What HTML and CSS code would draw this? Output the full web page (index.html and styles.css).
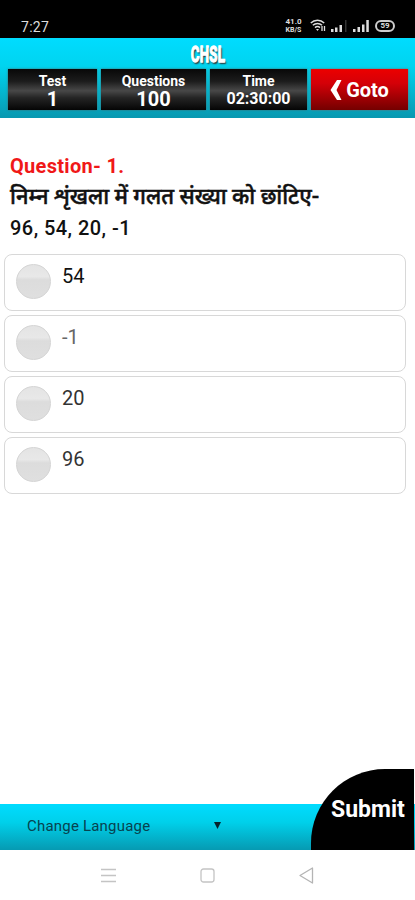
FILE: index.html
```html
<!DOCTYPE html>
<html lang="hi">
<head>
  <meta charset="UTF-8">
  <meta name="viewport" content="width=device-width, initial-scale=1.0">
  <title>CHSL Test</title>
  <link rel="stylesheet" href="styles.css">
</head>
<body>
  <div class="status-bar">
    <span class="clock">7:27</span>
    <div class="status-icons">
      <div class="net-speed"><span>41.0</span><span>KB/S</span></div>
      <svg class="wifi" width="16" height="13" viewBox="0 0 16 13" fill="none" stroke="#ddd" stroke-width="1.5">
        <path d="M0.8 4C4.5 0.3 10.5 0.3 14.2 4"/>
        <path d="M2.8 6.3C5.5 3.8 9.5 3.8 12 6.3"/>
        <path d="M5 8.6C6.5 7.2 8.5 7.2 10 8.6"/>
        <path d="M6 10h3l-1.5 2z" fill="#ddd" stroke="none"/>
        <path d="M12 7v5M14.5 7v5" stroke-width="1.3"/>
      </svg>
      <svg class="signal-one" width="17" height="12" viewBox="0 0 17 12" fill="#ddd">
        <path d="M0 9h2.5v3H0zM4 7.5h2.5v4.5H4zM8.5 5h2.5v7H8.5z"/>
        <path d="M14 0h1.5v12H14z" fill="#333"/>
      </svg>
      <svg class="signal-two" width="17" height="12" viewBox="0 0 17 12" fill="#ddd">
        <path d="M0 9h2.5v3H0zM4.5 7h2.5v5H4.5zM9 4.5h2.5v7.5H9zM13.3 0h2.5v12h-2.5z"/>
      </svg>
      <span class="battery">59</span>
    </div>
  </div>

  <div class="header">
    <h1>CHSL</h1>
    <div class="info-row">
      <div class="info-box"><span class="label">Test</span><span class="value">1</span></div>
      <div class="info-box"><span class="label">Questions</span><span class="value">100</span></div>
      <div class="info-box"><span class="label">Time</span><span class="value timer">02:30:00</span></div>
      <button class="goto-button">
        <svg width="12" height="20" viewBox="0 0 12 20" fill="#fff"><path d="M7 0h4.5L6.5 10l5 10H7L0.5 10z"/></svg>
        Goto
      </button>
    </div>
  </div>

  <div class="content">
    <h2>Question- 1.</h2>
    <p class="question">निम्न शृंखला में गलत संख्या को छांटिए-</p>
    <p class="series">96, 54, 20, -1</p>
    <div class="options">
      <div class="option"><span class="radio"></span><span class="option-text dark">54</span></div>
      <div class="option"><span class="radio"></span><span class="option-text light">-1</span></div>
      <div class="option"><span class="radio"></span><span class="option-text">20</span></div>
      <div class="option"><span class="radio"></span><span class="option-text">96</span></div>
    </div>
  </div>

  <div class="footer">
    <div class="language">
      <span>Change Language</span>
      <svg width="7" height="7" viewBox="0 0 7 7"><path d="M0 0h7L3.5 7z" fill="#06222a"/></svg>
    </div>
    <button class="submit-button">Submit</button>
  </div>

  <div class="nav-bar">
    <svg width="15" height="15" viewBox="0 0 15 15" stroke="#c4c4c4" stroke-width="1.3"><path d="M0 1.5h15M0 7.5h15M0 13.5h15"/></svg>
    <svg width="15" height="15" viewBox="0 0 15 15" fill="none" stroke="#c4c4c4" stroke-width="1.3"><rect x="1" y="1" width="13" height="13" rx="2.5"/></svg>
    <svg width="15" height="17" viewBox="0 0 15 17" fill="none" stroke="#b4b4b4" stroke-width="1.3" stroke-linejoin="round"><path d="M13.5 1v15L1 8.5z"/></svg>
  </div>
</body>
</html>
```
FILE: styles.css
```css
* {
  box-sizing: border-box;
}

body {
  display: flex;
  flex-direction: column;
  height: 900px;
  margin: 0;
  background-color: #fff;
  font-family: Roboto, "Noto Sans", sans-serif;
  overflow: hidden;
}

h1, h2, p {
  margin: 0;
}

button {
  border: none;
  padding: 0;
  color: #fff;
  font-family: inherit;
  font-weight: bold;
}

/* Phone status bar */
.status-bar {
  display: flex;
  justify-content: space-between;
  height: 38px;
  padding: 19px 20px 0 21px;
  background-color: #000;
  color: #ddd;
}

.clock {
  font-size: 14px;
  line-height: 16px;
  letter-spacing: 0.3px;
}

.status-icons {
  display: flex;
  align-items: flex-start;
}

.net-speed {
  display: flex;
  flex-direction: column;
  width: 19px;
  margin: -1px 7px 0 0;
  font-size: 8px;
  font-weight: bold;
  line-height: 8px;
  text-align: center;
}

.net-speed span:last-child {
  font-size: 7px;
}

.wifi {
  margin-right: 5px;
}

.signal-one {
  margin: 1px 5px 0 0;
}

.signal-two {
  margin: 1px 5px 0 0;
}

.battery {
  width: 20px;
  height: 12px;
  margin-top: 1px;
  border: 2px solid #ccc;
  border-radius: 6px;
  font-size: 8px;
  font-weight: bold;
  line-height: 8px;
  text-align: center;
}

/* Header */
.header {
  height: 80px;
  padding: 5px 7px 0 8px;
  background-image: linear-gradient(#00dcff, #00d4ef 35%, #0898b0);
}

.header h1 {
  height: 26px;
  color: #fff;
  font-size: 22px;
  line-height: 23px;
  letter-spacing: 0.5px;
  text-align: center;
  text-shadow: 2px 2px 2px #333;
  transform: scaleX(0.6);
  -webkit-text-stroke: 1.3px #fff;
}

.info-row {
  display: grid;
  grid-template-columns: 89px 105px 97px 97px;
  gap: 4px;
  height: 41px;
}

.info-box {
  display: flex;
  flex-direction: column;
  align-items: center;
  padding-top: 4px;
  background-image: linear-gradient(#080808, #1c1c1c 30%, #484848 53%, #252525 70%, #050505);
  box-shadow: 0 0 2px #466;
  color: #fff;
  font-weight: bold;
}

.label {
  font-size: 14px;
  line-height: 16px;
}

.value {
  font-size: 20px;
  line-height: 20px;
}

.timer {
  font-size: 16px;
}

.goto-button {
  display: flex;
  align-items: center;
  justify-content: center;
  gap: 4px;
  background-image: linear-gradient(#ec0000, #d40008 35%, #740000);
  box-shadow: 0 0 2px #766;
  font-size: 20px;
}

/* Question */
.content {
  flex: 1;
  padding: 33px 9px 0 4px;
}

.content h2 {
  padding-left: 6px;
  color: #f01818;
  font-size: 20px;
  line-height: 30px;
  letter-spacing: 0.3px;
}

.question,
.series {
  padding-left: 6px;
  color: #111;
  font-size: 20px;
  font-weight: 500;
  line-height: 31px;
}

.question {
  height: 32px;
  font-size: 21.9px;
  -webkit-text-stroke: 0.5px #111;
}

.series {
  letter-spacing: 0.45px;
}

.options {
  display: flex;
  flex-direction: column;
  gap: 4px;
  margin-top: 10px;
}

.option {
  display: flex;
  gap: 11px;
  height: 57px;
  padding: 9px 11px;
  border: 1.5px solid #d8d8d8;
  border-radius: 8px;
}

.radio {
  width: 35px;
  height: 35px;
  border: 1px solid #d4d4d4;
  border-radius: 50%;
  background-image: linear-gradient(#e4e4e4, #e8e8e8 35%, #dcdcdc 45%, #dfdfdf);
}

.option-text {
  color: #333;
  font-size: 20px;
  line-height: 24px;
}

.option-text.dark {
  color: #111;
}

.option-text.light {
  color: #666;
}

/* Footer */
.footer {
  display: flex;
  align-items: flex-end;
  justify-content: space-between;
  height: 46px;
  padding-right: 1px;
  background-image: linear-gradient(#00dcff, #00d0ea 40%, #069ab2);
}

.language {
  display: flex;
  align-items: center;
  gap: 64px;
  height: 46px;
  padding: 0 0 3px 27px;
  color: #07434f;
  font-size: 15px;
  letter-spacing: 0.2px;
}

.submit-button {
  width: 103px;
  height: 81px;
  padding-left: 20px;
  border-radius: 74px 0 0 0;
  background-color: #000;
  font-size: 23px;
  text-align: left;
}

/* Phone navigation */
.nav-bar {
  display: flex;
  align-items: center;
  justify-content: space-between;
  height: 50px;
  padding: 0 101px;
}
```
